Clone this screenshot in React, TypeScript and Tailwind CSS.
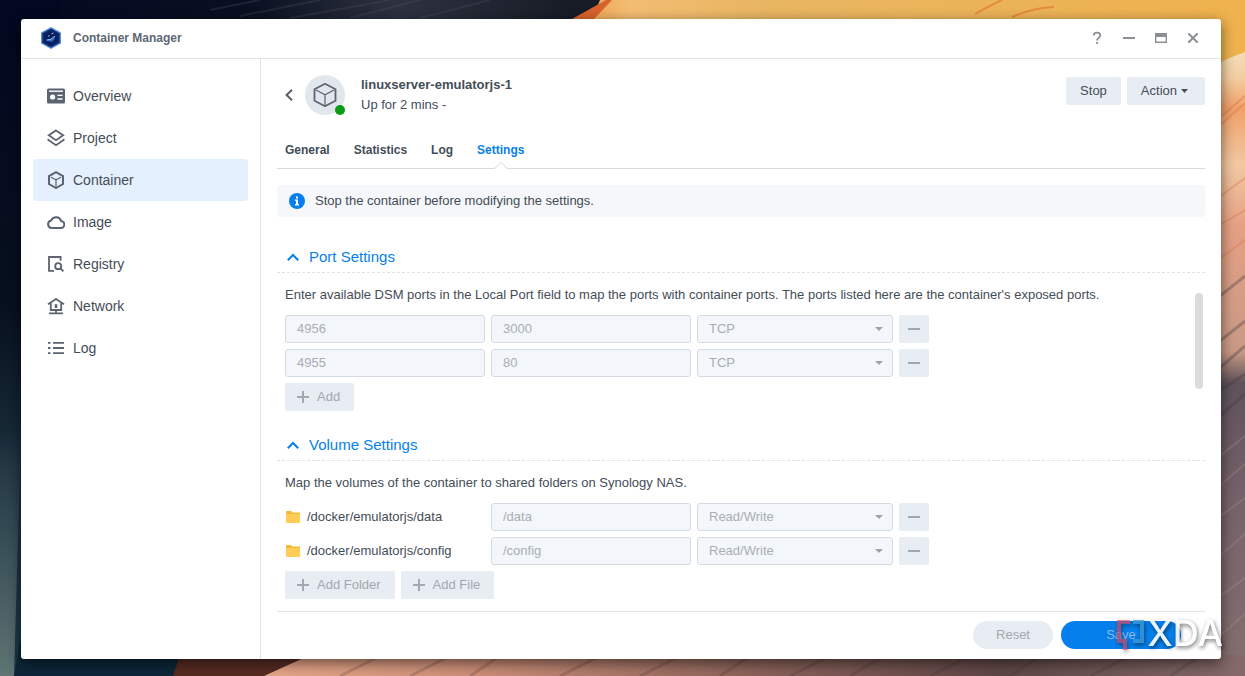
import type { ReactNode } from "react";

const navItems = ["Overview", "Project", "Container", "Image", "Registry", "Network", "Log"];
const tabs = ["General", "Statistics", "Log", "Settings"];

const ports = [
  { local: "4956", container: "3000", protocol: "TCP" },
  { local: "4955", container: "80", protocol: "TCP" },
];

const volumes = [
  { folder: "/docker/emulatorjs/data", mount: "/data", mode: "Read/Write" },
  { folder: "/docker/emulatorjs/config", mount: "/config", mode: "Read/Write" },
];

const navIcons: Record<string, ReactNode> = {
  Overview: (
    <>
      <rect x="0" y="1.5" width="18" height="15" rx="1.5" fill="currentColor" />
      <path d="M2 4.2h14" stroke="#fff" strokeWidth="1.4" />
      <circle cx="5.6" cy="10" r="2.6" fill="#fff" />
      <path d="M10.5 8.4h5M10.5 12h5" stroke="#fff" strokeWidth="1.4" />
    </>
  ),
  Project: (
    <>
      <path d="M9 1.4 16.2 6.2 9 11.2 1.8 6.2Z" />
      <path d="M1.4 9.8V11L9 16.2l7.600-5.200V9.800" />
    </>
  ),
  Container: (
    <>
      <path d="M9 1.2 16 5v8l-7 4-7-4V5Z" strokeWidth="2" />
      <path d="m4 6.2 5 2.6 5-2.6M9 8.8v7" strokeWidth="1.2" />
    </>
  ),
  Image: (
    <path
      d="M4.6 15h9a3.500 3.500 0 0 0 .5-7A5.300 5.300 0 0 0 4.200 7.400 3.850 3.850 0 0 0 4.600 15Z"
      strokeWidth="2"
    />
  ),
  Registry: (
    <>
      <path d="M7 15.8H2V2h11.6v3.8" />
      <circle cx="11.2" cy="11.2" r="3" />
      <path d="m13.4 13.4 3 3" strokeWidth="2" />
    </>
  ),
  Network: (
    <>
      <path d="M1 7.2 9 2l8 5.2M3.8 6v7h10.4V6" />
      <path d="M9 13v3M2 16.3h14" />
      <path d="M7.7 7.2h2.6V11H7.7Z" fill="currentColor" stroke="none" />
    </>
  ),
  Log: <path d="M1 3.8h2.5M6 3.8h11M1 9h2.5M6 9h11M1 14.2h2.5M6 14.2h11" />,
};

const NavIcon = ({ name }: { name: string }) => (
  <svg
    className="size-[18px] shrink-0 text-[#5b6470]"
    viewBox="0 0 18 18"
    fill="none"
    stroke="currentColor"
    strokeWidth={name === "Overview" ? 0 : 1.8}
  >
    {navIcons[name]}
  </svg>
);

const Wallpaper = () => (
  <svg
    className="absolute inset-0 size-full"
    viewBox="0 0 1245 676"
    preserveAspectRatio="xMidYMid slice"
    aria-hidden="true"
  >
    <defs>
      <linearGradient id="sky" x1="0" y1="0" x2="1" y2="0">
        <stop offset="0" stopColor="#020820" />
        <stop offset="0.2" stopColor="#0a1022" />
        <stop offset="0.32" stopColor="#2e323f" />
        <stop offset="0.46" stopColor="#171b26" />
      </linearGradient>
      <linearGradient id="leftEdge" x1="0" y1="0" x2="0" y2="1">
        <stop offset="0" stopColor="#020820" />
        <stop offset="0.45" stopColor="#07101e" />
        <stop offset="0.7" stopColor="#1b303e" />
        <stop offset="1" stopColor="#1d3a4a" />
      </linearGradient>
      <linearGradient id="grass" x1="0" y1="0" x2="0" y2="1">
        <stop offset="0" stopColor="#55696b" stopOpacity="0" />
        <stop offset="1" stopColor="#5f7473" />
      </linearGradient>
      <linearGradient id="sand" x1="0" y1="0" x2="1" y2="0">
        <stop offset="0" stopColor="#e9923f" />
        <stop offset="0.1" stopColor="#f3bd72" />
        <stop offset="0.3" stopColor="#e8b562" />
        <stop offset="1" stopColor="#efb24e" />
      </linearGradient>
      <linearGradient id="rightEdge" x1="0" y1="0" x2="0" y2="1">
        <stop offset="0" stopColor="#f4dcb8" />
        <stop offset="0.04" stopColor="#f3cfa2" />
        <stop offset="0.09" stopColor="#f0a068" />
        <stop offset="0.18" stopColor="#f2c8a2" />
        <stop offset="0.28" stopColor="#e5a084" />
        <stop offset="0.48" stopColor="#c99a86" />
        <stop offset="0.53" stopColor="#5f525b" />
        <stop offset="0.72" stopColor="#76626a" />
        <stop offset="1" stopColor="#84706f" />
      </linearGradient>
      <linearGradient id="ground" x1="0" y1="0" x2="1" y2="0">
        <stop offset="0" stopColor="#e5a688" />
        <stop offset="0.2" stopColor="#cf9079" />
        <stop offset="0.5" stopColor="#8a6259" />
        <stop offset="0.75" stopColor="#5f4646" />
        <stop offset="1" stopColor="#846a69" />
      </linearGradient>
    </defs>
    <path d="M0 0h1245v676H0Z" fill="url(#sky)" />
    <path d="M0 0h60v676H0Z" fill="url(#leftEdge)" />
    <path d="M20 640h180v36H14Z" fill="#0c2638" />
    <path d="M0 430h21l-7 246H0Z" fill="url(#grass)" />
    <path
      d="M210 10 260 0M240 16 320 0M290 18 390 0M350 18 420 0M420 18 490 0"
      stroke="#4b4f5c"
      strokeWidth="2"
      opacity="0.3"
    />
    <path d="M600 0h645v80H560Q590 25 600 0Z" fill="url(#sand)" />
    <path d="M572 19 606 0h6l-18 19Z" fill="#d8622b" />
    <path d="M975 14q18-10 27-14M1012 17q20-9 42-10" stroke="#e5702c" strokeWidth="2" fill="none" opacity="0.6" />
    <path d="M1195 80q20-18 50-28v624h-50Z" fill="url(#rightEdge)" />
    <path
      d="M1215 130l30-27M1215 122l30-26M1215 200l30-22M1215 228l30-18M1215 262l30-22"
      stroke="#dc6c46"
      strokeWidth="2"
      opacity="0.35"
    />
    <path
      d="M1215 300l30-24M1215 345l30-24M1215 372l30-26M1215 394l30-20M1215 420l30-26"
      stroke="#473b44"
      strokeWidth="3"
      opacity="0.35"
    />
    <path
      d="M1215 460l30-24M1215 490l30-26M1215 520l30-22M1215 560l30-26M1215 600l30-22M1215 640l30-26"
      stroke="#a28c8c"
      strokeWidth="2"
      opacity="0.35"
    />
    <path d="M180 655h130l-45 21h-92Z" fill="#552b21" />
    <path d="M310 655h935v21H264Z" fill="url(#ground)" />
    <path
      d="M340 676l40-20M410 676l40-20M470 676l30-20M560 676l40-20M640 676l40-20M720 676l30-20M790 676l40-20M850 676l34-20M930 676l40-20M1010 676l30-20M1090 676l40-20M1170 676l30-20"
      stroke="#3f2a2a"
      strokeWidth="3"
      opacity="0.2"
    />
  </svg>
);

const AppLogo = () => (
  <svg className="h-[22px] w-5" viewBox="0 0 20 22" fill="none">
    <path d="M10 0 20 5.5v11L10 22 0 16.5v-11Z" fill="#5a8fd6" />
    <path d="m10 1.4 8.700 4.800v9.600L10 20.600l-8.700-4.800V6.200Z" fill="#0d2a72" />
    <path d="m10 3.600 6.600 3.700v7.400L10 18.400l-6.600-3.700V7.300Z" fill="#0a1f5c" />
    <path d="M5.500 12.600q5 .6 8.600-3.600-.4 6-5 5.800-2.800-.2-3.600-2.200Z" fill="#2c66c4" />
    <path d="M5.500 13.200q4.500.2 8.500-4.200M10.500 6.800l2-.8M7 9.200l1.500-.6" stroke="#9cc4f5" strokeWidth="1" />
  </svg>
);

const Minus = () => (
  <svg className="size-3" viewBox="0 0 12 12" stroke="currentColor" strokeWidth="2">
    <path d="M0 6h12" />
  </svg>
);

const Plus = () => (
  <svg className="size-3" viewBox="0 0 12 12" stroke="currentColor" strokeWidth="2">
    <path d="M0 6h12M6 0v12" />
  </svg>
);

const Folder = () => (
  <svg className="ml-px h-3 w-3.5 shrink-0" viewBox="0 0 14 12">
    <path d="M0 1a1 1 0 0 1 1-1h4l1.5 1.5H13a1 1 0 0 1 1 1V6H0Z" fill="#f2b93a" />
    <path d="M0 3h14v8a1 1 0 0 1-1 1H1a1 1 0 0 1-1-1Z" fill="#ffcd55" />
  </svg>
);

const Field = ({ label, value }: { label: string; value: string }) => (
  <input
    type="text"
    aria-label={label}
    defaultValue={value}
    disabled
    className="h-7 w-[200px] rounded-[3px] border border-[#d3dae2] bg-[#f3f6fa] px-[11px] pb-0.5 text-[#a9aeb4]"
  />
);

const Dropdown = ({ label, value }: { label: string; value: string }) => (
  <div className="relative w-[196px]">
    <select
      aria-label={label}
      defaultValue={value}
      disabled
      className="h-7 w-full appearance-none rounded-[3px] border border-[#d3dae2] bg-[#f3f6fa] px-[11px] text-[#a9aeb4] opacity-100"
    >
      <option>{value}</option>
    </select>
    <svg className="absolute top-3 right-2.5 h-1 w-2" viewBox="0 0 8 4" fill="#9ea3a9">
      <path d="M0 0h8L4 4Z" />
    </svg>
  </div>
);

const RemoveButton = () => (
  <button
    disabled
    aria-label="Remove"
    className="flex h-7 w-[30px] items-center justify-center rounded-[2px] bg-[#e8edf3] text-[#a3a8ae]"
  >
    <Minus />
  </button>
);

const AddButton = ({ children }: { children: ReactNode }) => (
  <button
    disabled
    className="flex h-7 items-center gap-2 rounded-[2px] bg-[#e8edf3] pr-3.5 pl-3 text-[#a3a8ae]"
  >
    <Plus />
    {children}
  </button>
);

const Section = ({ title, description, children }: { title: string; description: string; children: ReactNode }) => (
  <section>
    <h2 className="h-8 border-b border-dashed border-[#dde2e8] px-2">
      <button className="flex h-full items-center gap-2 pt-0.5 text-[15px] text-[#057feb]">
        <svg className="size-4" viewBox="0 0 16 16" fill="none" stroke="currentColor" strokeWidth="2">
          <path d="m2.800 10.200 5.200-5.200 5.200 5.200" />
        </svg>
        {title}
      </button>
    </h2>
    <p className="mt-3 mb-2.5 px-2 leading-5">{description}</p>
    <div className="flex flex-col gap-1.5 px-2">{children}</div>
  </section>
);

const Watermark = () => (
  <div className="pointer-events-none absolute right-[22px] bottom-[23px] flex h-10 items-center text-white opacity-90 drop-shadow-[1px_2px_2px_rgba(0,0,0,0.6)]">
    <svg className="h-9 w-8" viewBox="0 0 32 36" fill="none" strokeWidth="4">
      <path d="M14 7H3v19h6v9" stroke="#e8486a" opacity="0.7" />
      <path d="M17 7h9v19h-9" stroke="#3c9bd8" opacity="0.85" />
    </svg>
    <span className="font-['Inter'] text-[36px] leading-10 font-medium">XDA</span>
  </div>
);

const App = () => {
  return (
    <div className="relative flex h-screen flex-col overflow-hidden pt-[19px] pr-6 pb-[17px] pl-[21px] font-['Liberation_Sans',sans-serif] text-[13px] text-[#444d57]">
      <Wallpaper />
      <div className="relative flex min-h-0 flex-1 flex-col rounded-[3px] bg-white shadow-[0_4px_14px_rgba(0,0,0,0.55)]">
        <header className="flex h-10 shrink-0 items-center border-b border-[#e0e3e7] px-5 pb-0.5">
          <AppLogo />
          <h1 className="ml-3 text-xs font-bold text-[#5d6874]">Container Manager</h1>
          <div className="ml-auto flex gap-4 text-[#8b9097]">
            <button aria-label="Help" className="flex size-4 items-center justify-center">
              <svg className="size-4" viewBox="0 0 16 16" fill="none" stroke="currentColor" strokeWidth="1.8">
                <path d="M4.8 5.4C4.8 3.4 6 2.7 8 2.7s3.3 1 3.3 2.8C11.3 7.7 8 7.8 8 10.6" />
                <path d="M8 12v2" />
              </svg>
            </button>
            <button aria-label="Minimize" className="flex size-4 items-center justify-center">
              <Minus />
            </button>
            <button aria-label="Maximize" className="flex size-4 items-center justify-center">
              <svg className="h-2.5 w-3" viewBox="0 0 12 10" fill="none" stroke="currentColor">
                <path d="M.7.7h10.6v8.6H.7Z" strokeWidth="1.4" />
                <path d="M0 2h12" strokeWidth="4" />
              </svg>
            </button>
            <button aria-label="Close" className="flex size-4 items-center justify-center">
              <svg className="size-2.5" viewBox="0 0 10 10" stroke="currentColor" strokeWidth="2">
                <path d="m.2.2 9.6 9.6M9.8.2.2 9.8" />
              </svg>
            </button>
          </div>
        </header>

        <div className="flex min-h-0 flex-1">
          <nav className="w-60 shrink-0 border-r border-[#e0e3e7] px-3 pt-4 text-sm">
            {navItems.map((item) => (
              <a
                key={item}
                href="#"
                className={`flex h-[42px] items-center gap-2 rounded-[4px] px-3.5 ${
                  item === "Container" ? "bg-[#e4f0fd]" : ""
                }`}
              >
                <NavIcon name={item} />
                {item}
              </a>
            ))}
          </nav>

          <main className="flex min-w-0 flex-1 flex-col px-4 pt-4">
            <div className="flex h-10 shrink-0 items-start">
              <button aria-label="Back" className="flex h-10 w-7 items-center pl-2">
                <svg className="h-3 w-2" viewBox="0 0 8 12" fill="none" stroke="#56606b" strokeWidth="2">
                  <path d="M7 .8 1.6 6 7 11.2" />
                </svg>
              </button>
              <div className="relative flex size-10 items-center justify-center rounded-full bg-[#e1e7ed]">
                <svg className="size-6" viewBox="0 0 24 24" fill="none" stroke="#5b6470" strokeWidth="1.8">
                  <path d="m12 .8 10.5 5.5v11.4L12 23.2 1.5 17.7V6.3Z" />
                  <path d="m3 7 9 4.7L21 7M12 11.7v10.5" strokeWidth="1.2" />
                </svg>
                <span className="absolute right-0 bottom-0 size-2.5 rounded-full bg-[#0a9c12]" />
              </div>
              <div className="ml-4 leading-5">
                <p className="font-bold">linuxserver-emulatorjs-1</p>
                <p>Up for 2 mins -</p>
              </div>
              <div className="mt-0.5 ml-auto flex gap-1.5">
                <button className="h-7 rounded-[2px] bg-[#e8edf3] px-3.5">Stop</button>
                <button className="flex h-7 items-center gap-1 rounded-[2px] bg-[#e8edf3] pr-[17px] pl-3.5">
                  Action
                  <svg className="h-1 w-[7px]" viewBox="0 0 7 4" fill="currentColor">
                    <path d="M0 0h7L3.5 4Z" />
                  </svg>
                </button>
              </div>
            </div>

            <div role="tablist" className="mt-4 flex h-[38px] shrink-0 gap-6 border-b border-[#d6dbe1] px-2">
              {tabs.map((tab) => (
                <button
                  key={tab}
                  role="tab"
                  aria-selected={tab === "Settings"}
                  className="relative text-xs font-bold aria-selected:text-[#057feb]"
                >
                  {tab}
                  {tab === "Settings" && (
                    <svg
                      className="absolute -bottom-px left-1/2 h-[7px] w-4 -translate-x-1/2"
                      viewBox="0 0 16 7"
                      fill="#fff"
                      stroke="#d6dbe1"
                    >
                      <path d="M1 7 8 .5 15 7" />
                    </svg>
                  )}
                </button>
              ))}
            </div>

            <div className="mt-4 flex h-8 shrink-0 items-center rounded-[3px] bg-[#f5f7fa] px-3">
              <svg className="mr-2.5 size-4" viewBox="0 0 16 16">
                <circle cx="8" cy="8" r="8" fill="#057feb" />
                <path d="M7 3.4h2v2H7ZM6 6.6h3V11h1v1.4H6V11h1V8H6Z" fill="#fff" />
              </svg>
              Stop the container before modifying the settings.
            </div>

            <div className="relative flex min-h-0 flex-1 flex-col gap-[18px] overflow-hidden pt-6">
              <Section
                title="Port Settings"
                description="Enter available DSM ports in the Local Port field to map the ports with container ports. The ports listed here are the container's exposed ports."
              >
                {ports.map((port) => (
                  <div key={port.local} className="flex gap-1.5">
                    <Field label="Local port" value={port.local} />
                    <Field label="Container port" value={port.container} />
                    <Dropdown label="Protocol" value={port.protocol} />
                    <RemoveButton />
                  </div>
                ))}
                <div className="flex">
                  <AddButton>Add</AddButton>
                </div>
              </Section>

              <Section
                title="Volume Settings"
                description="Map the volumes of the container to shared folders on Synology NAS."
              >
                {volumes.map((volume) => (
                  <div key={volume.folder} className="flex gap-1.5">
                    <div className="flex w-[200px] items-center gap-[7px]">
                      <Folder />
                      {volume.folder}
                    </div>
                    <Field label="Mount path" value={volume.mount} />
                    <Dropdown label="Permission" value={volume.mode} />
                    <RemoveButton />
                  </div>
                ))}
                <div className="flex gap-1.5">
                  <AddButton>Add Folder</AddButton>
                  <AddButton>Add File</AddButton>
                </div>
              </Section>

              <div className="absolute top-[76px] right-0.5 h-24 w-2 rounded-full bg-[#dcdcdc]" />
            </div>

            <footer className="flex h-12 shrink-0 items-center justify-end gap-2 border-t border-[#e0e3e7] pr-6 pb-0.5">
              <button disabled className="h-7 w-20 rounded-full bg-[#e8edf3] text-[#a3a8ae]">
                Reset
              </button>
              <button disabled className="h-7 w-[120px] rounded-full bg-[#057feb] text-[#8ab9e8]">
                Save
              </button>
            </footer>
          </main>
        </div>
      </div>
      <Watermark />
    </div>
  );
};

export default App;
